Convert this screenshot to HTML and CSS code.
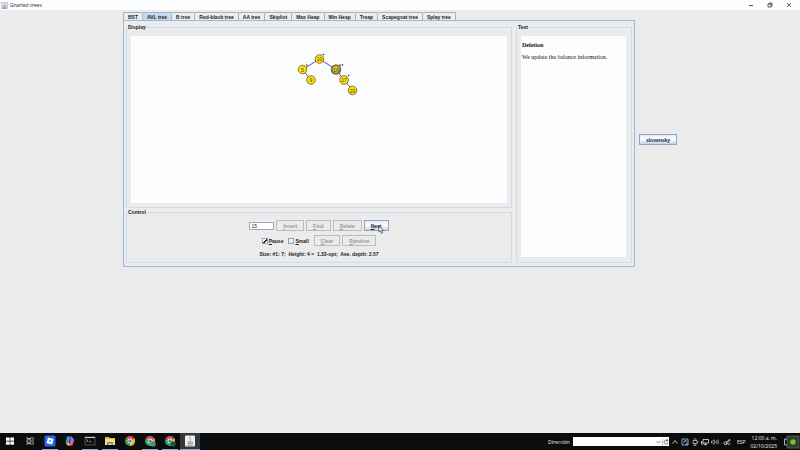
FILE: index.html
```html
<!DOCTYPE html>
<html lang="en">
<head>
<meta charset="utf-8">
<title>Gnarled trees</title>
<link rel="stylesheet" href="styles.css">
</head>
<body>
<header class="titlebar">
  <svg class="app-icon" viewBox="0 0 16 16"><rect x="1" y="1" width="14" height="14" fill="#e3e9ef" stroke="#8aa0b4"/><path d="M9 2c-4 3 2 3-1 6" fill="none" stroke="#e48a3a" stroke-width="1.6"/><path d="M4 9h8M5 11.500h6M3 14h10" stroke="#4b7397" stroke-width="1.4"/></svg>
  <span class="title">Gnarled trees</span>
  <svg class="win-icon" viewBox="0 0 6 6"><path d="M1 3.500h4" stroke="#222" stroke-width=".8"/></svg>
  <svg class="win-icon" viewBox="0 0 6 6"><path d="M1 2h3v3h-3zM2 2v-1h3v3h-1" fill="none" stroke="#222" stroke-width=".7"/></svg>
  <svg class="win-icon" viewBox="0 0 6 6"><path d="M1 1l4 4M5 1l-4 4" stroke="#222" stroke-width=".7"/></svg>
</header>
<main class="desktop">
  <div class="tabbed">
    <div class="tabs" role="tablist">
      <button class="tab" role="tab">BST</button>
      <button class="tab selected" role="tab" aria-selected="true">AVL tree</button>
      <button class="tab" role="tab">B tree</button>
      <button class="tab" role="tab">Red-black tree</button>
      <button class="tab" role="tab">AA tree</button>
      <button class="tab" role="tab">Skiplist</button>
      <button class="tab" role="tab">Max Heap</button>
      <button class="tab" role="tab">Min Heap</button>
      <button class="tab" role="tab">Treap</button>
      <button class="tab" role="tab">Scapegoat tree</button>
      <button class="tab" role="tab">Splay tree</button>
    </div>
    <div class="panel">
      <div class="left">
        <fieldset class="group display">
          <legend>Display</legend>
          <svg class="canvas" viewBox="0 0 376 167">
            <g stroke="#333" stroke-width=".8"><path d="M188.500 23L171.500 33.500L180 44M188.500 23L205 33.500L213 44L221.500 54" fill="none"/></g>
            <circle cx="205" cy="33.500" r="5.300" fill="#6f7484"/>
            <g fill="#fddf10" stroke="#55500c" stroke-width=".7">
              <circle cx="188.500" cy="23" r="4.300"/><circle cx="171.500" cy="33.500" r="4.300"/><circle cx="180" cy="44" r="4.300"/>
              <circle cx="205" cy="33.500" r="3.900" fill="#e3c92c"/><circle cx="213" cy="44" r="4.300"/><circle cx="221.500" cy="54.500" r="4.300"/>
            </g>
            <g class="key">
              <text x="188.500" y="25">10</text><text x="171.500" y="35.500">5</text><text x="180" y="46">9</text>
              <text x="205" y="35.500">16</text><text x="213" y="46">17</text><text x="221.500" y="56.500">20</text>
            </g>
            <g fill="#222"><circle cx="192.500" cy="18.500" r=".8"/><circle cx="175.800" cy="29" r=".8"/><circle cx="209" cy="29" r=".8"/><circle cx="211.500" cy="29" r=".8"/><circle cx="217.500" cy="39.500" r=".8"/></g>
            <g fill="#aaa"><circle cx="184" cy="39.500" r=".4"/><circle cx="225.500" cy="49.500" r=".4"/></g>
          </svg>
        </fieldset>
        <fieldset class="group control">
          <legend>Control</legend>
          <div class="row">
            <input class="value" type="text" value="15" aria-label="Value">
            <button class="btn" disabled><u>I</u>nsert</button>
            <button class="btn" disabled><u>F</u>ind</button>
            <button class="btn" disabled><u>D</u>elete</button>
            <button class="btn active"><u>N</u>ext
              <svg class="cursor" viewBox="0 0 6 9"><path d="M1 1v6l1.300-1.200 1.200 2.600 1.200-.6-1.200-2.300h1.900z" fill="#fff" stroke="#222" stroke-width=".6"/></svg>
            </button>
          </div>
          <div class="row second">
            <label class="check"><input type="checkbox" checked><span><u>P</u>ause</span></label>
            <label class="check"><input type="checkbox"><span><u>S</u>mall</span></label>
            <button class="btn" disabled><u>C</u>lear</button>
            <button class="btn" disabled><u>R</u>andom</button>
          </div>
          <p class="status">Size: #1: 7;&nbsp; Height: 4 =&nbsp; 1.33-opt;&nbsp; Ave. depth: 2.57</p>
        </fieldset>
      </div>
      <fieldset class="group side">
        <legend>Text</legend>
        <article class="note">
          <h1>Deletion</h1>
          <p>We update the balance information.</p>
        </article>
      </fieldset>
    </div>
  </div>
  <button class="btn active lang">slovensky</button>
</main>
<footer class="taskbar">
  <div class="apps">
    <span class="app"><svg viewBox="0 0 12 12"><path d="M2 2.500h3.700v3.300H2zM6.300 2.500H10v3.300H6.300zM2 6.400h3.700v3.300H2zM6.300 6.400H10v3.300H6.300z" fill="#fff"/></svg></span>
    <span class="app"><svg viewBox="0 0 12 12"><path d="M3 2v1.500h4V2M3 10V8.500h4V10M3 4.800h4v2.400H3zM9 2v8" fill="none" stroke="#ccc" stroke-width=".8"/></svg></span>
    <span class="app open"><svg viewBox="0 0 12 12"><rect x=".5" y=".5" width="11" height="11" rx="1.500" fill="#2563f5"/><path d="M4 2.500L9.500 4 8 9.500 2.500 8z" fill="#fff"/><path d="M5.400 5l1.700.4-.5 1.600-1.600-.4z" fill="#2563f5"/></svg></span>
    <span class="app"><svg viewBox="0 0 12 12"><path d="M3 1.500h4L5 7.500H1.500z" fill="#3192e8"/><path d="M7 1.500c2 0 1.500 3 3.500 3L9 8H6z" fill="#b768e8"/><path d="M1.500 7.500h3.700l1 3H4c-1.500 0-1-2-2.500-3z" fill="#f2c33c"/><path d="M6 7h3.500L8.300 10.500H5.500z" fill="#ee6279"/></svg></span>
    <span class="app open"><svg viewBox="0 0 12 12"><rect x="1" y="2" width="10" height="8" fill="#111" stroke="#777" stroke-width=".6"/><path d="M1 2.500h10" stroke="#ccc"/><path d="M2.500 4.500l1.500 1-1.500 1M5 6.500h2" fill="none" stroke="#ddd" stroke-width=".6"/></svg></span>
    <span class="app open"><svg viewBox="0 0 12 12"><path d="M1 2h4l1 1h5v7H1z" fill="#e9ad32"/><path d="M1 4h10v6H1z" fill="#ffdc75"/><path d="M3 10V7h6v3H7.500V8.500h-3V10z" fill="#3c91d4"/></svg></span>
    <span class="app"><svg viewBox="0 0 12 12"><circle cx="6" cy="6" r="5" fill="#34a853"/><path d="M6 6l4.300-2.500A5 5 0 0 1 6 11z" fill="#fbbc05"/><path d="M1.700 3.500a5 5 0 0 1 8.600 0L6 6z" fill="#ea4335"/><circle cx="6" cy="6" r="2.400" fill="#fff"/><circle cx="6" cy="6" r="1.800" fill="#4285f4"/></svg></span>
    <span class="app open"><svg viewBox="0 0 12 12"><circle cx="6" cy="6" r="5" fill="#34a853"/><path d="M6 6l4.300-2.500A5 5 0 0 1 6 11z" fill="#fbbc05"/><path d="M1.700 3.500a5 5 0 0 1 8.600 0L6 6z" fill="#ea4335"/><circle cx="6" cy="6" r="2.400" fill="#fff"/><circle cx="6" cy="6" r="1.800" fill="#4285f4"/><circle cx="9" cy="9" r="2.800" fill="#3f8f87"/></svg></span>
    <span class="app open"><svg viewBox="0 0 12 12"><circle cx="6" cy="6" r="5" fill="#34a853"/><path d="M6 6l4.300-2.500A5 5 0 0 1 6 11z" fill="#fbbc05"/><path d="M1.700 3.500a5 5 0 0 1 8.600 0L6 6z" fill="#ea4335"/><circle cx="6" cy="6" r="2.400" fill="#fff"/><circle cx="6" cy="6" r="1.800" fill="#4285f4"/><circle cx="9" cy="9" r="2.800" fill="#17574f"/></svg></span>
    <span class="app open current"><svg viewBox="0 0 12 12"><rect x="1" y=".5" width="10" height="11" rx="1" fill="#eee"/><path d="M6.500 1.500c-2.500 2 1.500 2-.5 4.500" fill="none" stroke="#e27a2d" stroke-width=".9"/><path d="M3.500 7h4.500c1.500 0 1 1.500 0 1.500M4 8.500h3.500M3 10.200h6" fill="none" stroke="#52779a" stroke-width=".8"/></svg></span>
  </div>
  <div class="tray">
    <label class="addr-label" for="addr">Dirección</label>
    <div class="addr">
      <input id="addr" type="text">
      <svg viewBox="0 0 6 8"><path d="M1 3l2 2 2-2" fill="none" stroke="#555" stroke-width=".7"/></svg>
      <svg class="reload" viewBox="0 0 6 8"><path d="M4.500 2.700A2 2 0 1 0 5 4.500M4.700 1v2h-2" fill="none" stroke="#444" stroke-width=".7"/></svg>
    </div>
    <svg class="ti" viewBox="0 0 8 8"><path d="M1.500 5.500l2.500-3 2.500 3" fill="none" stroke="#eee" stroke-width=".8"/></svg>
    <svg class="ti" viewBox="0 0 8 8"><path d="M1 1h6v6H1zM2.500 5l2-3 1 2" fill="none" stroke="#ddd" stroke-width=".7"/><circle cx="6" cy="6" r="1.500" fill="#3f9be8"/></svg>
    <svg class="ti" viewBox="0 0 8 8"><path d="M2 2.500h4v3H2zM2.500 1h3M4 5.500v2M2.500 7.300h3M6 4h1.500" fill="none" stroke="#ddd" stroke-width=".7"/></svg>
    <svg class="ti" viewBox="0 0 8 8"><path d="M2 1.500h5.500V5H2zM4.500 5v1.700M3 6.700h3M.500 3v3h2" fill="none" stroke="#eee" stroke-width=".8"/></svg>
    <svg class="ti" viewBox="0 0 8 8"><path d="M.5 3h1.200l1.500-1.300v4.600L1.700 5H.5zM4.300 3v2M5.600 2.200q1 1.800 0 3.600M6.800 1.500q1.400 2.500 0 5" fill="none" stroke="#ddd" stroke-width=".6"/></svg>
    <svg class="ti pen" viewBox="0 0 8 8"><path d="M3 5l3.500-3.800.8.800L4 5.500zM3.500 4C1 3 0 6 2 6.500S4 5 5 6s2 0 2-1" fill="none" stroke="#eee" stroke-width=".8"/></svg>
    <span class="kbd">ESP</span>
    <time class="clock">12:00 a. m.<br>02/10/2025</time>
    <svg class="notice" viewBox="0 0 18 16"><path d="M5 5H2.500v6H5" fill="none" stroke="#ddd" stroke-width=".8"/><rect x="5" y="2" width="12" height="12" fill="#343936" stroke="#66706a" stroke-width=".7"/><circle cx="11" cy="8" r="2.700" fill="#75c41f"/></svg>
  </div>
</footer>
</body>
</html>
```
FILE: styles.css
```css
* { box-sizing: border-box; }
body {
  margin: 0;
  min-height: 100vh;
  display: flex;
  flex-direction: column;
  background: #ebebeb;
  color: #222;
  font: bold 5px/6px "Liberation Sans", Arial, sans-serif;
}
button, input { font: inherit; color: inherit; margin: 0; }
svg { display: block; }

.titlebar {
  display: flex;
  align-items: center;
  height: 10px;
  padding: 0 8px 0 1px;
  background: #fcfdff;
  font: 5px/8px "Open Sans", sans-serif;
}
.app-icon { width: 7px; height: 7px; }
.title { margin: 0 auto 0 2px; }
.win-icon { width: 6px; height: 6px; margin-left: 13px; }

.desktop {
  flex: 1;
  display: flex;
  justify-content: center;
  align-items: center;
  align-content: flex-start;
  flex-wrap: wrap;
  gap: 4px;
  padding-top: 2px;
}
.tabbed { width: 64%; }
.tabs { display: flex; padding-right: 183px; }
.tab {
  flex: 1 0 auto;
  height: 8px;
  padding: 0 4px;
  border: 1px solid #a9b2bb;
  border-width: 1px 0 0 1px;
  border-top-left-radius: 2px;
  background: #ededed;
  white-space: nowrap;
}
.tab:last-child { border-right-width: 1px; }
.tab.selected { background: #c5d9ef; border-color: #9db8d6; }

.panel {
  display: flex;
  gap: 4px;
  padding: 3px 2px;
  border: 1px solid #9db8d6;
  background: #ebecee;
}
.left { flex: 1; display: flex; flex-direction: column; gap: 1px; }
.group {
  min-width: 0;
  margin: 0;
  padding: 6px 4px 4px;
  border: 1px solid #d0dbe6;
  background: #ebebeb;
}
.group legend { margin-left: -4px; padding: 0 1px; line-height: 6px; }
.canvas { width: 100%; background: #fcfdff; }
.key text { font: 5px "Liberation Sans", Arial, sans-serif; text-anchor: middle; fill: #443f08; }
.side { width: 116px; display: flex; flex-direction: column; padding: 6px 5px 5px 4px; }
.note {
  height: 100%;
  padding: 6px 1px;
  background: #fcfdff;
  font: 6px/7px "Liberation Serif", "Times New Roman", serif;
  color: #111;
}
.note h1 { margin: 0 0 5px; font-size: 6px; }
.note p { margin: 0; }

.row { display: flex; justify-content: center; align-items: center; gap: 2px; }
.second { margin-top: 4px; }
.control { padding: 5px 4px; }
.value {
  width: 25px;
  height: 8px;
  padding: 0 1px;
  border: 1px solid #9bacbf;
  background: #fff;
  font-weight: normal;
}
.btn {
  position: relative;
  height: 11px;
  padding: 0 6px;
  border: 1px solid #bcbcbc;
  background: #ebebeb;
  line-height: 6px;
}
.btn:disabled { color: #999; }
.btn.active { border-color: #8ea6bf; background: linear-gradient(#e2ecf6, #fdfeff 45%, #bfd3e8); }
.cursor { position: absolute; left: 13px; top: 4px; width: 6px; height: 9px; }
.check { display: flex; align-items: center; gap: 1px; margin-right: 3px; }
.check input {
  appearance: none;
  width: 6px;
  height: 6px;
  border: 1px solid #8ca4bd;
  background: linear-gradient(#fff, #d4e2f0);
}
.check input:checked {
  background: linear-gradient(135deg, transparent 40%, #222 40%, #222 65%, transparent 65%), #fff;
}
.status { margin: 5px 0 0; text-align: center; }
.lang.btn { width: 38px; padding: 0; }

.taskbar {
  display: flex;
  justify-content: space-between;
  height: 17px;
  background: #0b0c0d;
  color: #eee;
  font: 5px/8px "Open Sans", sans-serif;
}
.apps, .tray { display: flex; align-items: center; }
.apps { gap: 4px; padding-left: 2px; }
.app {
  display: flex;
  align-items: center;
  justify-content: center;
  width: 16px;
  height: 17px;
  border-bottom: 1px solid transparent;
}
.app svg { width: 12px; height: 12px; }
.app.open { border-color: #77add9; }
.app.current { width: 20px; margin-left: -2px; background: #35383a; }
.addr { display: flex; align-items: center; height: 9px; margin: 0 2px 0 3px; background: #fff; }
.addr input { width: 82px; height: 9px; border: 0; padding: 0 1px; background: none; color: #222; }
.addr svg { width: 7px; height: 8px; }
.addr .reload { border-left: 1px solid #ccc; }
.ti { width: 8px; height: 8px; margin-right: 2px; }
.pen { margin: 0 6px 0 2px; }
.kbd { margin-right: 5px; }
.clock { text-align: right; margin-right: 5px; }
.notice { width: 18px; height: 16px; }
```
